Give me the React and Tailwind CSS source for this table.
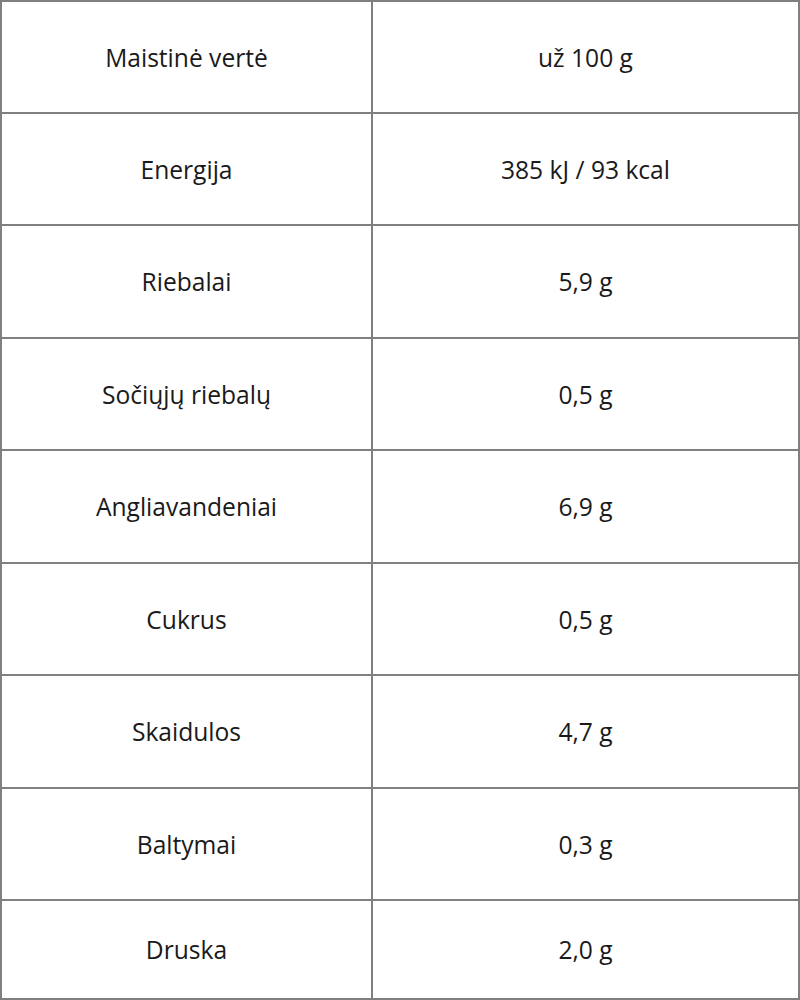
const rows = [
  { label: 'Maistinė vertė', value: 'už 100 g', h: 'h-[112px]' },
  { label: 'Energija', value: '385 kJ / 93 kcal', h: 'h-[112px]' },
  { label: 'Riebalai', value: '5,9 g', h: 'h-[113px]' },
  { label: 'Sočiųjų riebalų', value: '0,5 g', h: 'h-[112px]' },
  { label: 'Angliavandeniai', value: '6,9 g', h: 'h-[113px]' },
  { label: 'Cukrus', value: '0,5 g', h: 'h-[112px]' },
  { label: 'Skaidulos', value: '4,7 g', h: 'h-[113px]' },
  { label: 'Baltymai', value: '0,3 g', h: 'h-[112px]' },
  { label: 'Druska', value: '2,0 g', h: 'flex-1' },
]

export default function App() {
  return (
    <div className="flex h-[1000px] w-[800px] flex-col border-2 border-[#808080] bg-white font-['Open_Sans',sans-serif] text-[24.6px] text-[#1a1a1a]">
      {rows.map((r, i) => (
        <div
          key={r.label}
          className={`flex pt-[2px] ${r.h} ${i < rows.length - 1 ? 'border-b-2 border-[#808080]' : ''}`}
        >
          <div className="-mt-[2px] flex w-[371px] items-center justify-center border-r-2 border-[#808080] pt-[2px]">
            {r.label}
          </div>
          <div className="flex flex-1 items-center justify-center">{r.value}</div>
        </div>
      ))}
    </div>
  )
}
